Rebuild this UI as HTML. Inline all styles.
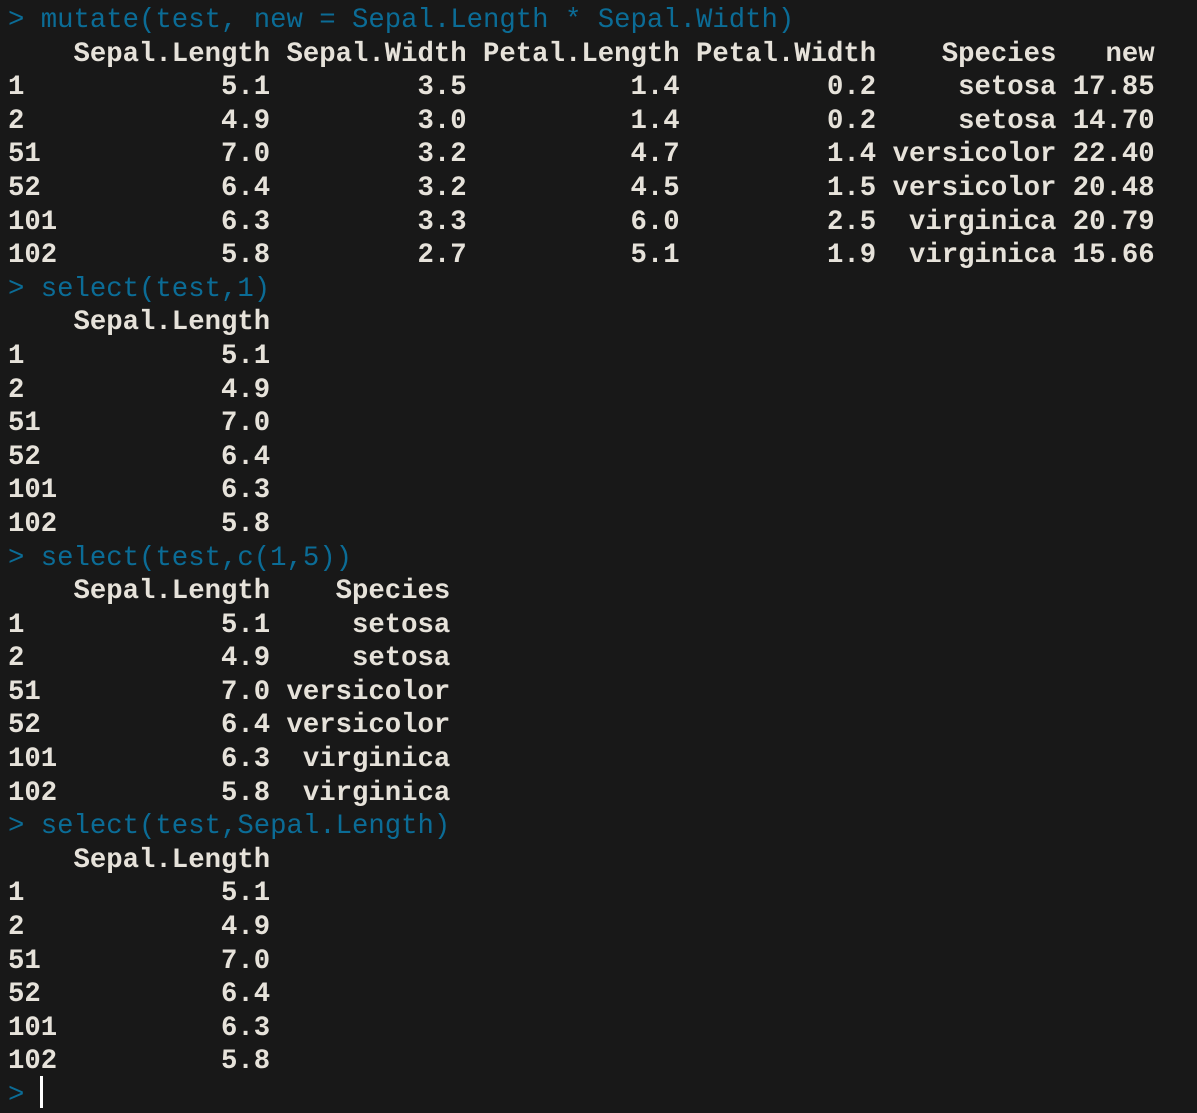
<!DOCTYPE html>
<html><head><meta charset="utf-8"><style>
html,body{margin:0;padding:0;background:#181818;width:1197px;height:1112px;overflow:hidden}
pre{margin:0;position:absolute;left:8px;top:4px;font-family:"Liberation Mono",monospace;font-size:27.3px;line-height:33.6px;color:#e6e2da;font-weight:bold;letter-spacing:0}
.p{color:#0b6c96;font-weight:normal}
.cur{position:absolute;left:40px;top:1076px;width:3px;height:32px;background:#fff}
</style></head><body><pre><span class="p">&gt; mutate(test, new = Sepal.Length * Sepal.Width)</span>
    Sepal.Length Sepal.Width Petal.Length Petal.Width    Species   new
1            5.1         3.5          1.4         0.2     setosa 17.85
2            4.9         3.0          1.4         0.2     setosa 14.70
51           7.0         3.2          4.7         1.4 versicolor 22.40
52           6.4         3.2          4.5         1.5 versicolor 20.48
101          6.3         3.3          6.0         2.5  virginica 20.79
102          5.8         2.7          5.1         1.9  virginica 15.66
<span class="p">&gt; select(test,1)</span>
    Sepal.Length
1            5.1
2            4.9
51           7.0
52           6.4
101          6.3
102          5.8
<span class="p">&gt; select(test,c(1,5))</span>
    Sepal.Length    Species
1            5.1     setosa
2            4.9     setosa
51           7.0 versicolor
52           6.4 versicolor
101          6.3  virginica
102          5.8  virginica
<span class="p">&gt; select(test,Sepal.Length)</span>
    Sepal.Length
1            5.1
2            4.9
51           7.0
52           6.4
101          6.3
102          5.8
<span class="p">&gt;</span></pre><div class="cur"></div></body></html>
